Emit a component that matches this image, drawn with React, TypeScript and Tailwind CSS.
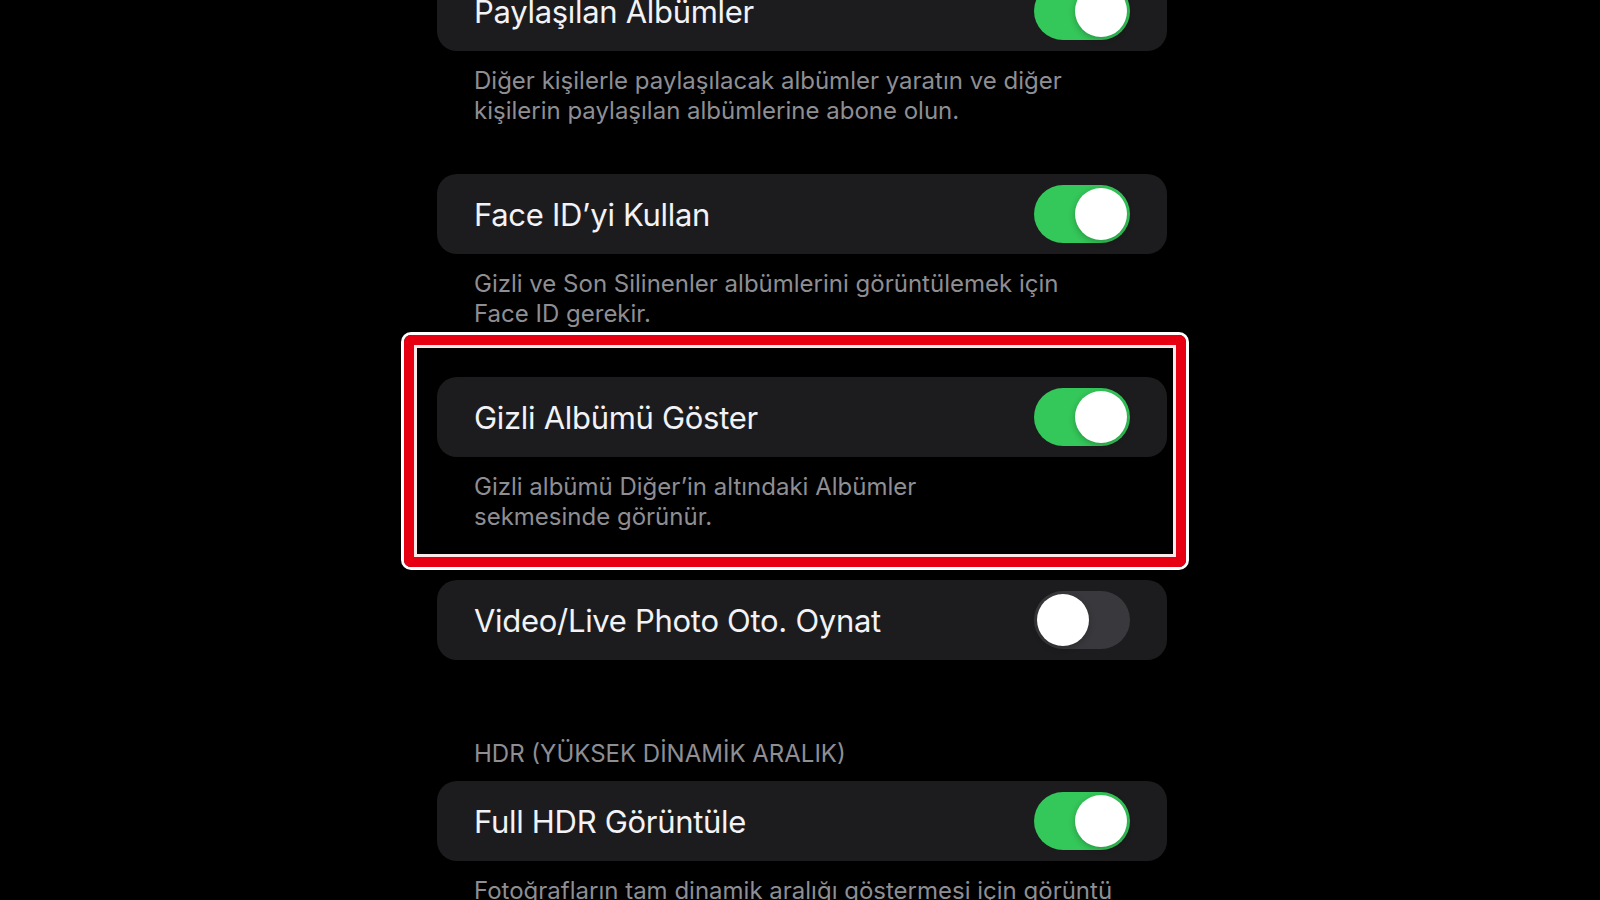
import React from "react";

type Row = {
  title: string;
  on: boolean;
  desc?: React.ReactNode;
};

function Toggle({ on }: { on: boolean }) {
  return (
    <div
      className={
        on
          ? "flex h-[58px] w-[96px] shrink-0 items-center justify-end rounded-full bg-[#34c759] px-[3px]"
          : "flex h-[58px] w-[96px] shrink-0 items-center justify-start rounded-full bg-[#39393d] px-[3px]"
      }
    >
      <div className="h-[52px] w-[52px] rounded-full bg-white shadow-[0_2px_6px_rgba(0,0,0,0.25)]" />
    </div>
  );
}

function Card({ title, on }: { title: string; on: boolean }) {
  return (
    <div className="flex h-[80px] items-center justify-between rounded-[20px] bg-[#1c1c1e] pl-[37px] pr-[37px]">
      <span className="text-[31px] leading-none tracking-[-0.3px] text-[#f2f2f7]">{title}</span>
      <Toggle on={on} />
    </div>
  );
}

function Footer({ children }: { children: React.ReactNode }) {
  return (
    <p className="mt-[15px] px-[37px] text-[24px] leading-[30px] text-[#8e8e93]">{children}</p>
  );
}

function Group({ row, highlight }: { row: Row; highlight?: boolean }) {
  return (
    <div className="relative">
      <Card title={row.title} on={row.on} />
      {row.desc && <Footer>{row.desc}</Footer>}
      {highlight && (
        // annotation drawn over the row
        <div className="pointer-events-none absolute top-[-45px] right-[-22px] bottom-[-38px] left-[-36px] rounded-[10px] border-[3px] border-white">
          <div className="h-full w-full rounded-[7px] border-[10px] border-[#e60012]">
            <div className="h-full w-full border-[3px] border-[#fbe9e9]" />
          </div>
        </div>
      )}
    </div>
  );
}

export default function App() {
  return (
    <div
      className="flex h-[900px] w-full justify-center overflow-hidden bg-black pl-[4px]"
      style={{ fontFamily: '"Inter", "Noto Sans", sans-serif' }}
    >
      <div className="mt-[-29px] w-[730px]">
        <Card title="Paylaşılan Albümler" on />
        <Footer>
          Diğer kişilerle paylaşılacak albümler yaratın ve diğer
          <br />
          kişilerin paylaşılan albümlerine abone olun.
        </Footer>

        <div className="mt-[48px]">
          <Group
            row={{
              title: "Face ID’yi Kullan",
              on: true,
              desc: (
                <>
                  Gizli ve Son Silinenler albümlerini görüntülemek için
                  <br />
                  Face ID gerekir.
                </>
              ),
            }}
          />
        </div>

        <div className="mt-[48px]">
          <Group
            highlight
            row={{
              title: "Gizli Albümü Göster",
              on: true,
              desc: (
                <>
                  Gizli albümü Diğer’in altındaki Albümler
                  <br />
                  sekmesinde görünür.
                </>
              ),
            }}
          />
        </div>

        <div className="mt-[48px]">
          <Card title="Video/Live Photo Oto. Oynat" on={false} />
        </div>

        <div className="mt-[79px] px-[37px] text-[24px] leading-[30px] text-[#8e8e93]">
          HDR (YÜKSEK DİNAMİK ARALIK)
        </div>

        <div className="mt-[12px]">
          <Card title="Full HDR Görüntüle" on />
          <Footer>Fotoğrafların tam dinamik aralığı göstermesi için görüntü</Footer>
        </div>
      </div>
    </div>
  );
}
